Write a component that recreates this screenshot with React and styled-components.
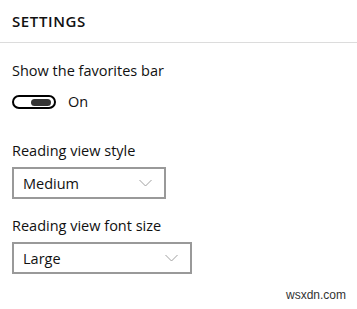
import React, { useState } from 'react';
import styled, { createGlobalStyle } from 'styled-components';

const GlobalStyle = createGlobalStyle`
  html, body {
    margin: 0;
    padding: 0;
    background: #fff;
  }
  body {
    font-family: "Open Sans", "Noto Sans", sans-serif;
    color: #000;
  }
`;

const Page = styled.div`
  position: relative;
  width: 357px;
  height: 309px;
  background: #fff;
  overflow: hidden;
`;

const Header = styled.div`
  height: 42px;
  padding: 0 12px;
  display: flex;
  align-items: center;
  border-bottom: 1px solid #dcdcdc;
  font-size: 15px;
  font-weight: 600;
  letter-spacing: 0.6px;
  color: #111;
`;

const Body = styled.div`
  padding: 0 12px;
  display: flex;
  flex-direction: column;
`;

const Label = styled.div`
  font-size: 14.5px;
  line-height: 20px;
  color: #111;
  margin-top: ${(p) => p.top}px;
`;

const ToggleRow = styled.div`
  display: flex;
  align-items: center;
  gap: 12px;
  margin-top: 11px;
  font-size: 14.5px;
  line-height: 20px;
  color: #111;
`;

const Track = styled.button`
  width: 44px;
  height: 14px;
  border: 2px solid #000;
  border-radius: 8px;
  background: #fff;
  padding: 0 3px;
  display: flex;
  align-items: center;
  justify-content: ${(p) => (p.on ? 'flex-end' : 'flex-start')};
  box-sizing: border-box;
  cursor: pointer;
`;

const Knob = styled.span`
  width: 20px;
  height: 7px;
  border-radius: 4px;
  background: #333;
`;

const Select = styled.div`
  box-sizing: border-box;
  width: ${(p) => p.width}px;
  height: 32px;
  margin-top: 6px;
  border: 2px solid #999;
  padding: 0 12px 0 9px;
  display: flex;
  align-items: center;
  justify-content: space-between;
  font-size: 14.5px;
  color: #111;
`;

const Chevron = () => (
  <svg width="13" height="8" viewBox="0 0 13 8">
    <path d="M0.5 1 L6.5 7 L12.5 1" fill="none" stroke="#a0a0a0" strokeWidth="1" />
  </svg>
);

const Watermark = styled.div`
  position: absolute;
  right: 11px;
  bottom: 7px;
  font-family: "Liberation Sans", Arial, sans-serif;
  font-size: 12px;
  color: #333;
`;

const App = () => {
  const [on, setOn] = useState(true);
  return (
    <Page>
      <GlobalStyle />
      <Header>SETTINGS</Header>
      <Body>
        <Label top={18}>Show the favorites bar</Label>
        <ToggleRow>
          <Track on={on} onClick={() => setOn(!on)}>
            <Knob />
          </Track>
          <span>{on ? 'On' : 'Off'}</span>
        </ToggleRow>
        <Label top={29}>Reading view style</Label>
        <Select width={154}>
          <span>Medium</span>
          <Chevron />
        </Select>
        <Label top={17}>Reading view font size</Label>
        <Select width={180}>
          <span>Large</span>
          <Chevron />
        </Select>
      </Body>
      <Watermark>wsxdn.com</Watermark>
    </Page>
  );
};

export default App;
